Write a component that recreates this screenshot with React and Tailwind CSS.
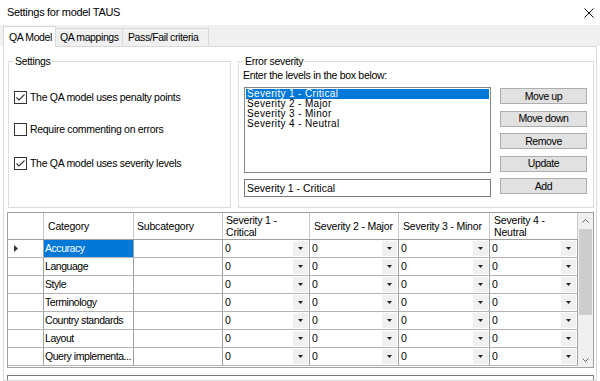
import React from "react";

const rows = [
  "Accuracy",
  "Language",
  "Style",
  "Terminology",
  "Country standards",
  "Layout",
  "Query implementa...",
];

function Check({ checked }) {
  return (
    <div className="w-[13px] h-[13px] border border-[#333333] bg-white flex items-center justify-center shrink-0">
      {checked && (
        <svg width="11" height="11" viewBox="0 0 11 11">
          <polyline points="1.5,5.5 4,8 9.5,2.5" fill="none" stroke="#333333" strokeWidth="1.1" />
        </svg>
      )}
    </div>
  );
}

function Combo({ w }) {
  return (
    <div className={`${w} h-full border-r border-[#a0a0a0] flex items-center relative shrink-0`}>
      <span className="pl-[2px] leading-none">0</span>
      <div className="absolute right-[1px] top-[1px] bottom-[1px] w-[15px] bg-[#f0f0f0] flex items-center justify-center">
        <svg width="5" height="3" viewBox="0 0 5 3">
          <polygon points="0,0 5,0 2.5,3" fill="#222222" />
        </svg>
      </div>
    </div>
  );
}

export default function App() {
  return (
    <div className="w-[600px] h-[381px] overflow-hidden bg-white text-black font-['Liberation_Sans',Arial,sans-serif] text-[10.5px] tracking-[-0.3px] flex flex-col">
      {/* title bar */}
      <div className="h-[25px] shrink-0 flex items-center justify-between pl-[7px] pr-[6px]">
        <span className="text-[11px] leading-none">Settings for model TAUS</span>
        <svg width="10" height="10" viewBox="0 0 10 10">
          <path d="M0.5 0.5L9.5 9.5M9.5 0.5L0.5 9.5" stroke="#111111" strokeWidth="1" />
        </svg>
      </div>

      {/* tab strip */}
      <div className="h-[21px] shrink-0 bg-[#f0f0f0] flex items-end pl-[3px] whitespace-nowrap">
        <div className="h-[21px] w-[53px] bg-white border border-b-0 border-[#d9d9d9] relative z-10 -mb-[1px] flex items-center pl-[5px] leading-none tracking-[-0.4px]">
          QA Model
        </div>
        <div className="h-[18px] w-[67px] border border-l-0 border-b-0 border-[#d9d9d9] flex items-center pl-[4px] leading-none tracking-[-0.4px]">
          QA mappings
        </div>
        <div className="h-[18px] w-[86px] border border-l-0 border-b-0 border-[#d9d9d9] flex items-center pl-[5px] leading-none tracking-[-0.4px]">
          Pass/Fail criteria
        </div>
      </div>

      {/* panel */}
      <div className="flex-1 mx-[3px] border border-[#d9d9d9] bg-white flex flex-col">
        <div className="flex mt-[14px] ml-[4px]">
          {/* Settings group */}
          <div className="relative w-[223px] h-[147px] border border-[#dcdcdc] pl-[5px]">
            <span className="absolute -top-[8px] left-[5px] bg-white px-[1px] leading-[14px]">Settings</span>
            <div className="flex items-center mt-[29px] h-[13px]">
              <Check checked />
              <span className="ml-[3px] leading-none whitespace-nowrap">The QA model uses penalty points</span>
            </div>
            <div className="flex items-center mt-[19px] h-[13px]">
              <Check />
              <span className="ml-[3px] leading-none whitespace-nowrap">Require commenting on errors</span>
            </div>
            <div className="flex items-center mt-[21px] h-[13px]">
              <Check checked />
              <span className="ml-[3px] leading-none whitespace-nowrap">The QA model uses severity levels</span>
            </div>
          </div>

          {/* Error severity group */}
          <div className="relative ml-[7px] w-[356px] h-[147px] border border-[#dcdcdc] pl-[4px] pt-[6px]">
            <span className="absolute -top-[8px] left-[5px] bg-white px-[1px] leading-[14px]">Error severity</span>
            <div className="leading-[14px] whitespace-nowrap">Enter the levels in the box below:</div>
            <div className="flex mt-[5px]">
              <div className="w-[247px] ml-[1px]">
                <div className="h-[86px] border border-[#828790] p-[1px] text-[10px] tracking-[0.35px]">
                  <div className="h-[10px] bg-[#0078d7] text-white leading-[10px] pl-[1px]">Severity 1 - Critical</div>
                  <div className="h-[10px] leading-[10px] pl-[1px]">Severity 2 - Major</div>
                  <div className="h-[10px] leading-[10px] pl-[1px]">Severity 3 - Minor</div>
                  <div className="h-[10px] leading-[10px] pl-[1px]">Severity 4 - Neutral</div>
                </div>
                <div className="mt-[6px] h-[18px] border border-[#7a7a7a] flex items-center pl-[2px] text-[10.5px] tracking-[0px] leading-none">
                  Severity 1 - Critical
                </div>
              </div>
              <div className="ml-[9px] mt-[1px] flex flex-col gap-[6.5px]">
                {["Move up", "Move down", "Remove", "Update", "Add"].map((b) => (
                  <div
                    key={b}
                    className="w-[87px] h-[16px] bg-[#e1e1e1] border border-[#adadad] flex items-center justify-center leading-none tracking-[-0.4px]"
                  >
                    {b}
                  </div>
                ))}
              </div>
            </div>
          </div>
        </div>

        {/* grid */}
        <div className="mt-[4px] ml-[3px] w-[587px] h-[156px] border border-[#a0a0a0] flex overflow-hidden tracking-[-0.2px] whitespace-nowrap">
          <div className="flex flex-col">
            {/* header */}
            <div className="h-[27px] flex border-b border-[#a0a0a0] shrink-0">
              <div className="w-[36px] h-full border-r border-[#c8c8c8]" />
              <div className="w-[90px] h-full border-r border-[#c8c8c8] flex items-center pl-[4px] leading-none">Category</div>
              <div className="w-[89px] h-full border-r border-[#c8c8c8] flex items-center pl-[3px] leading-none">Subcategory</div>
              <div className="w-[87px] h-full border-r border-[#c8c8c8] pl-[3px] pt-[1px] leading-[12px]">
                Severity 1 -<br />Critical
              </div>
              <div className="w-[89px] h-full border-r border-[#c8c8c8] flex items-center pl-[4px] leading-none">Severity 2 - Major</div>
              <div className="w-[91px] h-full border-r border-[#c8c8c8] flex items-center pl-[4px] leading-none">Severity 3 - Minor</div>
              <div className="w-[88px] h-full border-r border-[#c8c8c8] pl-[4px] pt-[1px] leading-[12px]">
                Severity 4 -<br />Neutral
              </div>
            </div>
            {rows.map((r, i) => (
              <div key={r} className="h-[18px] flex border-b border-[#b4b4b4] shrink-0">
                <div className="w-[36px] h-full border-r border-[#a0a0a0] flex items-center pl-[6px]">
                  {i === 0 && (
                    <svg width="4" height="7" viewBox="0 0 4 7">
                      <polygon points="0,0 4,3.5 0,7" fill="#333333" />
                    </svg>
                  )}
                </div>
                <div
                  className={`w-[90px] h-full border-r border-[#a0a0a0] flex items-center pl-[1px] leading-none overflow-hidden tracking-[-0.45px] ${
                    i === 0 ? "bg-[#0078d7] text-white" : ""
                  }`}
                >
                  {r}
                </div>
                <div className="w-[89px] h-full border-r border-[#a0a0a0]" />
                <Combo w="w-[87px]" />
                <Combo w="w-[89px]" />
                <Combo w="w-[91px]" />
                <Combo w="w-[88px]" />
              </div>
            ))}
          </div>
          {/* scrollbar */}
          <div className="w-[15px] h-full bg-[#f0f0f0] flex flex-col items-center shrink-0">
            <div className="h-[15px] w-full flex items-center justify-center">
              <svg width="7" height="4" viewBox="0 0 7 4">
                <polyline points="0.5,3.5 3.5,0.5 6.5,3.5" fill="none" stroke="#606060" strokeWidth="1" />
              </svg>
            </div>
            <div className="mt-[1px] w-[13px] h-[86px] bg-[#cdcdcd]" />
            <div className="flex-1" />
            <div className="h-[15px] w-full flex items-center justify-center">
              <svg width="7" height="4" viewBox="0 0 7 4">
                <polyline points="0.5,0.5 3.5,3.5 6.5,0.5" fill="none" stroke="#606060" strokeWidth="1" />
              </svg>
            </div>
          </div>
        </div>

        {/* box below */}
        <div className="mt-[7px] ml-[3px] w-[587px] flex-1 border border-b-0 border-[#7a7a7a]" />
      </div>
    </div>
  );
}
